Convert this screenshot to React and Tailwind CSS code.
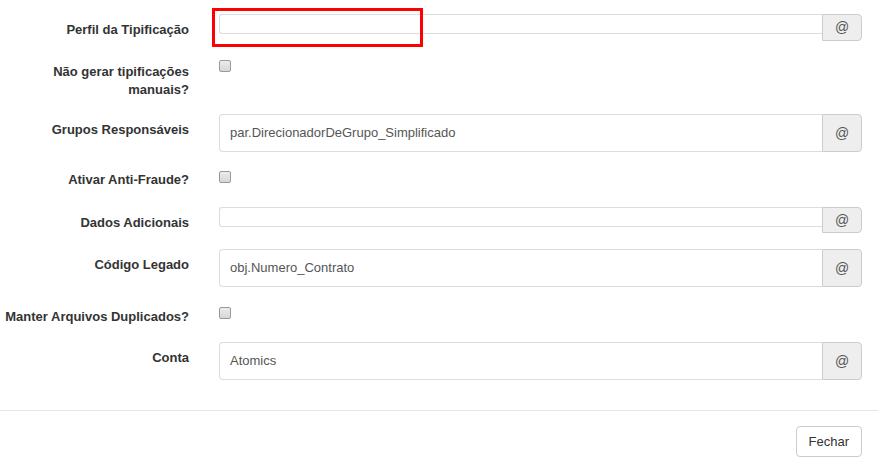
import React from 'react'

const font = { fontFamily: '"Liberation Sans", Arial, Helvetica, sans-serif' }

const Label = ({ children }) => (
  <div className="w-[205px] shrink-0 pr-[16px] pt-[7px] text-right text-[13px] leading-[18px] font-bold text-[#333]">
    {children}
  </div>
)

const Addon = ({ h }) => (
  <div
    className={`w-[40px] shrink-0 flex items-center justify-center bg-[#eee] border border-[#ccc] rounded-r-[4px] text-[14px] text-[#555] ${h}`}
  >
    @
  </div>
)

const TallInput = ({ value }) => (
  <div className="flex-1 flex">
    <div className="flex-1 h-[38px] flex items-center pl-[10px] border border-r-0 border-[#ddd] rounded-l-[4px] text-[13px] text-[#555] bg-white">
      {value}
    </div>
    <Addon h="h-[38px]" />
  </div>
)

const ThinInput = ({ addonH }) => (
  <div className="flex-1 flex items-start">
    <div className="flex-1 h-[20px] border border-r-0 border-[#ddd] rounded-l-[3px] bg-white" />
    <Addon h={addonH} />
  </div>
)

const Checkbox = () => (
  <span className="block w-[12px] h-[12px] rounded-[2px] border border-[#9a9a9a] bg-gradient-to-b from-[#ececec] to-[#d6d6d6]" />
)

export default function App() {
  return (
    <div className="w-[878px] h-[470px] bg-white overflow-hidden" style={font}>
      <div className="pt-[14px]">
        {/* Perfil da Tipificação */}
        <div className="flex mb-[15px]">
          <Label>Perfil da Tipificação</Label>
          <div className="flex-1 pl-[14px] pr-[16px] flex">
            <div className="relative flex-1 flex">
              <ThinInput addonH="h-[27px]" />
              <div className="absolute left-[-7px] top-[-6px] w-[211px] h-[39px] border-[3px] border-[#ff0000]" />
            </div>
          </div>
        </div>

        {/* Não gerar tipificações manuais? */}
        <div className="flex mb-[15px]">
          <Label>
            Não gerar tipificações
            <br />
            manuais?
          </Label>
          <div className="flex-1 pl-[14px] pt-[4px]">
            <Checkbox />
          </div>
        </div>

        {/* Grupos Responsáveis */}
        <div className="flex mb-[12px]">
          <Label>Grupos Responsáveis</Label>
          <div className="flex-1 pl-[14px] pr-[16px] flex">
            <TallInput value="par.DirecionadorDeGrupo_Simplificado" />
          </div>
        </div>

        {/* Ativar Anti-Fraude? */}
        <div className="flex h-[43px]">
          <Label>Ativar Anti-Fraude?</Label>
          <div className="flex-1 pl-[14px] pt-[7px]">
            <Checkbox />
          </div>
        </div>

        {/* Dados Adicionais */}
        <div className="flex mb-[16px]">
          <Label>Dados Adicionais</Label>
          <div className="flex-1 pl-[14px] pr-[16px] flex">
            <ThinInput addonH="h-[26px]" />
          </div>
        </div>

        {/* Código Legado */}
        <div className="flex mb-[14px]">
          <Label>Código Legado</Label>
          <div className="flex-1 pl-[14px] pr-[16px] flex">
            <TallInput value="obj.Numero_Contrato" />
          </div>
        </div>

        {/* Manter Arquivos Duplicados? */}
        <div className="flex h-[41px]">
          <Label>Manter Arquivos Duplicados?</Label>
          <div className="flex-1 pl-[14px] pt-[6px]">
            <Checkbox />
          </div>
        </div>

        {/* Conta */}
        <div className="flex">
          <Label>Conta</Label>
          <div className="flex-1 pl-[14px] pr-[16px] flex">
            <TallInput value="Atomics" />
          </div>
        </div>
      </div>

      {/* Footer */}
      <div className="mt-[30px] border-t border-[#e5e5e5] pt-[15px] pr-[16px] flex justify-end">
        <button className="h-[31px] px-[12px] border border-[#ccc] rounded-[4px] bg-white text-[13px] text-[#333]" style={font}>
          Fechar
        </button>
      </div>
    </div>
  )
}
